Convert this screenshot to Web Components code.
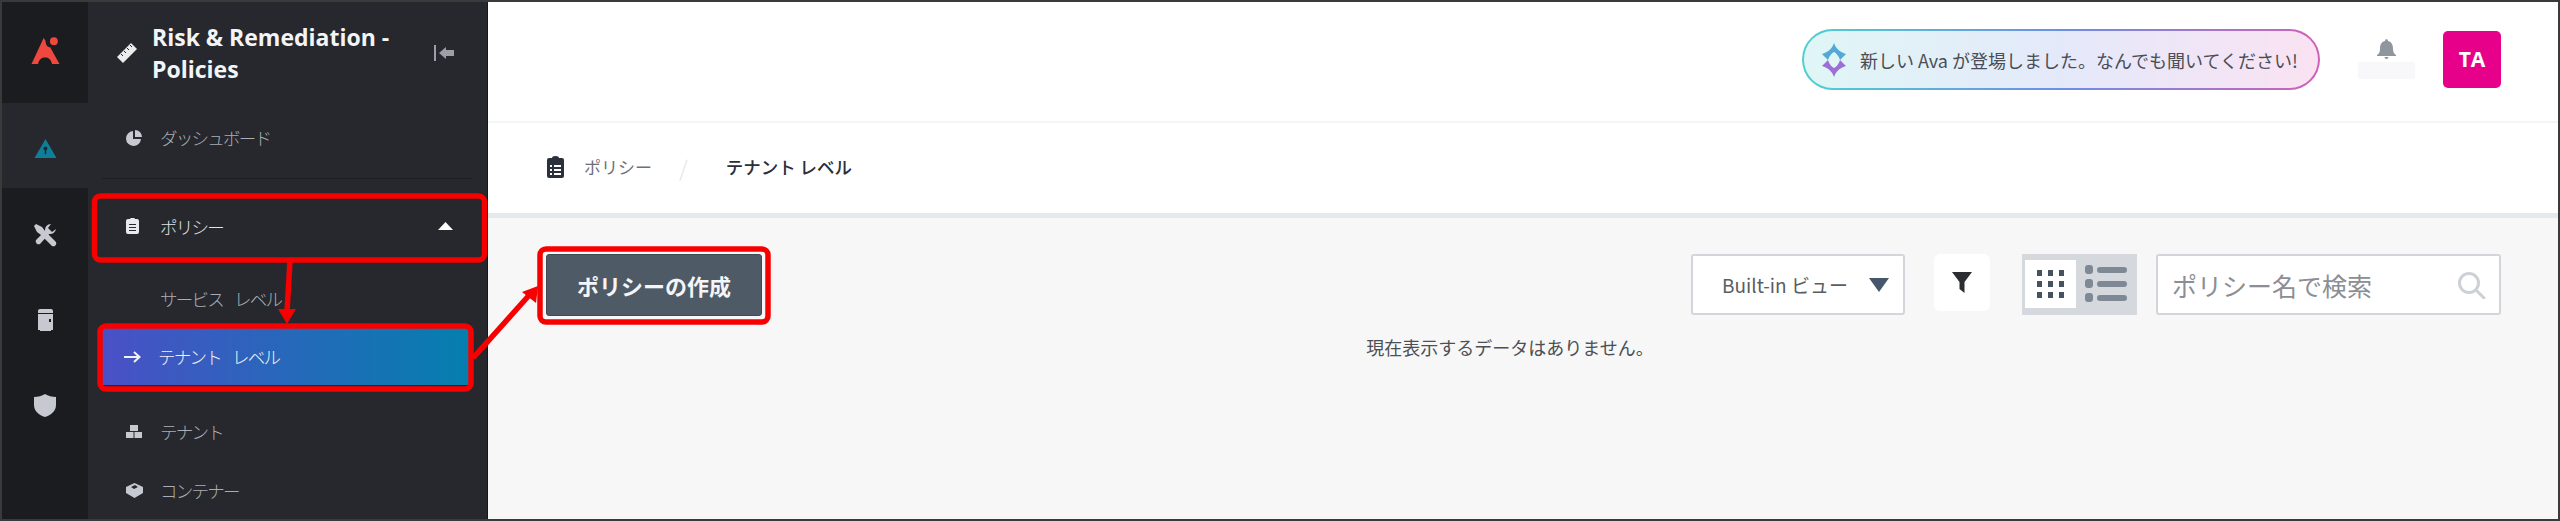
<!DOCTYPE html>
<html lang="ja">
<head>
<meta charset="utf-8">
<title>Policies</title>
<style>
  html, body { margin: 0; height: 521px; overflow: hidden; background: #fff; }
  body { font-family: "Noto Sans CJK JP", "Noto Sans", sans-serif; }
</style>
</head>
<body>
<app-shell>
  <icon-rail slot="rail">
    <rail-item logo>
      <svg viewBox="0 0 30 30" width="29" height="28"><path fill="#f0483e" d="M13 1 L0 29 H7 C8 24 11 22 14.5 22 C18 22 21 24 22 29 H30 L20 11 C17 11 15 8 15 4Z"/><circle cx="24" cy="4.5" r="4.2" fill="#f0483e"/></svg>
    </rail-item>
    <rail-item active>
      <svg viewBox="0 0 24 22" width="23" height="21"><path fill="#0f7f98" d="M12 1 L23.5 21 H.5Z"/><circle cx="12" cy="11" r="2" fill="#1d2a33"/><rect x="11.2" y="12" width="1.6" height="5" fill="#1d2a33"/></svg>
    </rail-item>
    <rail-item>
      <svg viewBox="0 0 24 24" width="24" height="24"><g fill="#c6c9d0"><path d="M3 1 L9 4 L12 8 L23 19 A3 3 0 0 1 19 23 L8 12 L4 9 L1 3Z"/><path d="M23 6 A6 6 0 0 1 16 11 L7 21 A3 3 0 0 1 3 17 L12 8 A6 6 0 0 1 18 1 L15 5 L19 9Z"/></g></svg>
    </rail-item>
    <rail-item>
      <svg viewBox="0 0 15 22" width="15" height="22"><path fill="#c6c9d0" d="M2 0 H13 A2 2 0 0 1 15 2 V4 H0 V2 A2 2 0 0 1 2 0Z M0 5 H15 V21 H13 V22 H2 V21 H0Z"/><rect x="11" y="10" width="2" height="3" fill="#1b1c1f"/></svg>
    </rail-item>
    <rail-item>
      <svg viewBox="0 0 22 23" width="22" height="23"><path fill="#c6c9d0" d="M11 0 C14 2 18 3 22 3 V11 C22 17 17 21 11 23 C5 21 0 17 0 11 V3 C4 3 8 2 11 0Z"/></svg>
    </rail-item>
  </icon-rail>

  <side-nav slot="nav" title="Risk &amp; Remediation - Policies">
    <nav-item style="height:55px;margin-bottom:13px">
      <svg slot="icon" viewBox="0 0 16 16" width="16" height="16"><path fill="#c6c9d0" d="M7 1 V9 H15 A7.5 7.5 0 1 1 7 1Z M9 0 A7 7 0 0 1 16 7 H9Z"/></svg>
      ダッシュボード
    </nav-item>
    <nav-divider></nav-divider>
    <nav-item open style="height:66px;margin:14px 0 10px">
      <svg slot="icon" viewBox="0 0 13 16" width="13" height="16"><path fill="#e8e9ec" fill-rule="evenodd" d="M2 1 H4 A2.5 1.2 0 0 1 9 1 H11 A2 2 0 0 1 13 3 V14 A2 2 0 0 1 11 16 H2 A2 2 0 0 1 0 14 V3 A2 2 0 0 1 2 1Z M3 6 V7 H10 V6Z M3 9 V10 H10 V9Z M3 12 V13 H10 V12Z"/></svg>
      ポリシー
      <svg slot="end" viewBox="0 0 15 8" width="15" height="8"><path fill="#fff" d="M7.5 0 L15 8 H0Z"/></svg>
    </nav-item>
    <nav-item style="height:59px">サービス レベル</nav-item>
    <nav-item current style="height:57px;margin-bottom:19px">
      <svg slot="icon" viewBox="0 0 17 12" width="17" height="12" fill="none" stroke="#f1f2f6" stroke-width="2"><path d="M0 6 H15 M10 1 L15.5 6 L10 11"/></svg>
      テナント レベル
    </nav-item>
    <nav-item style="height:55px;margin-bottom:3px">
      <svg slot="icon" viewBox="0 0 16 14" width="16" height="14"><path fill="#c6c9d0" d="M4 0 H12 V6 H4Z M0 7 H7.5 V13 H0Z M8.5 7 H16 V13 H8.5Z"/></svg>
      テナント
    </nav-item>
    <nav-item style="height:56px">
      <svg slot="icon" viewBox="0 0 17 15" width="17" height="15"><path fill="#c6c9d0" d="M8.5 0 L17 4 V10 L8.5 15 L0 10 V4Z"/><path fill="#26282d" d="M5 4 L9 2 L12 4 L8 6Z"/></svg>
      コンテナー
    </nav-item>
  </side-nav>

  <top-header slot="main"></top-header>
  <bread-crumbs slot="main" parent="ポリシー" current="テナント レベル"></bread-crumbs>
  <policy-content slot="main"></policy-content>

  <red-notes slot="notes"></red-notes>
</app-shell>

<script>
// little helper so each class only has to give its html
class Base extends HTMLElement {
    constructor() {
        super();
        this.shadow = this.attachShadow({mode: 'open'});
    }
    connectedCallback() {
        this.shadow.innerHTML = this.render();
    }
}

class AppShell extends Base {
    render() {
        return `
        <style>
            :host { display: block; position: relative; box-sizing: border-box; width: 2560px; height: 521px; border: 2px solid #3a3a3a; overflow: hidden; }
            .wrap { display: flex; height: 100%; }
            .main { flex: 1; display: flex; flex-direction: column; min-width: 0; }
        </style>
        <div class="wrap">
            <slot name="rail"></slot>
            <slot name="nav"></slot>
            <div class="main"><slot name="main"></slot></div>
        </div>
        <slot name="notes"></slot>
        `;
    }
}

class IconRail extends Base {
    render() {
        return `
        <style>
            :host { display: flex; flex-direction: column; width: 86px; flex: none; background: #1b1c1f; }
        </style>
        <slot></slot>
        `;
    }
}

class RailItem extends Base {
    render() {
        return `
        <style>
            :host { display: flex; align-items: center; justify-content: center; box-sizing: border-box; height: 85px; padding-top: 9px; flex: none; }
            :host([logo]) { height: 101px; padding: 0 0 4px; }
            :host([active]) { background: #26282d; padding-top: 5px; }
        </style>
        <slot></slot>
        `;
    }
}

class SideNav extends Base {
    render() {
        return `
        <style>
            :host { display: flex; flex-direction: column; width: 400px; flex: none; background: #26282d; border-right: 1px solid #16171a; box-sizing: border-box; }
            header { display: flex; align-items: center; height: 108px; box-sizing: border-box; padding: 0 33px 6px 28px; }
            svg.ruler { margin-right: 14px; flex: none; }
            h1 { margin: 0; flex: 1; font: 700 23px/32px "Open Sans", sans-serif; color: #f3f4f6; }
            svg.back { flex: none; }
        </style>
        <header>
            <svg class="ruler" width="22" height="22" viewBox="0 0 22 22"><path fill="#ececee" d="M15 1 L21 7 L7 21 L1 15Z"/><path stroke="#26282d" stroke-width="1" d="M5 12 l2 2 M8 9 l2 2 M11 6 l2 2 M14 3 l2 2"/></svg>
            <h1>${this.getAttribute('title')}</h1>
            <svg class="back" width="20" height="16" viewBox="0 0 20 16"><rect x="0" y="0" width="2" height="16" fill="#9ba0a8"/><path fill="#9ba0a8" d="M5 8 L12 2 V5 H20 V11 H12 V14Z"/></svg>
        </header>
        <slot></slot>
        `;
    }
}

class NavItem extends Base {
    render() {
        return `
        <style>
            :host { display: flex; align-items: center; box-sizing: border-box; margin: 0; padding-left: 38px; color: #a9acb2; font-size: 17.5px; letter-spacing: -1.75px; word-spacing: 9px; font-weight: 300; flex: none; }
            :host([open]) { color: #e3e4e7; background: #26282d; }
            :host([current]) { color: #f1f2f6; margin-left: 13px !important; margin-right: 17px !important; padding-left: 23px; background: linear-gradient(90deg, #4a50c6, #047fae); }
            .ico { width: 34px; flex: none; display: flex; align-items: center; }
            .ico ::slotted(svg) { display: block; }
            .txt { flex: 1; }
            .end { padding-right: 34px; display: flex; }
        </style>
        <div class="ico"><slot name="icon"></slot></div>
        <div class="txt"><slot></slot></div>
        <div class="end"><slot name="end"></slot></div>
        `;
    }
}

class NavDivider extends Base {
    render() {
        return `
        <style>
            :host { display: block; height: 1px; margin: 0 14px; background: #1e1f23; flex: none; }
        </style>
        `;
    }
}

class TopHeader extends Base {
    render() {
        return `
        <style>
            :host { display: flex; align-items: center; justify-content: flex-end; box-sizing: border-box; height: 121px; background: #fff; border-bottom: 2px solid #f3f6f6; padding: 0 57px 5px 0; flex: none; }
            .pill { display: flex; align-items: center; box-sizing: border-box; width: 518px; height: 61px; padding: 2px 0 0 18px; border-radius: 31px; border: 2px solid transparent;
                background: linear-gradient(90deg, #e0f6f6, #e4e9fa 50%, #fae2f2) padding-box, linear-gradient(90deg, #4fd0cf, #6d8fe6 50%, #cf62b8) border-box;
                font-size: 18px; font-weight: 400; color: #4a4d55; white-space: nowrap; }
            .pill svg { margin-right: 14px; flex: none; }
            .bell { width: 57px; margin-left: 38px; margin-right: 28px; display: flex; flex-direction: column; align-items: center; }
            .bell i { display: block; width: 57px; height: 17px; margin-top: 3px; background: #f8f7fa; border-radius: 2px; }
            .avatar { width: 58px; height: 57px; border-radius: 5px; background: #e6008a; color: #fff; font: 700 21px "Open Sans", sans-serif; display: flex; align-items: center; justify-content: center; }
        </style>
        <div class="pill">
            <svg width="24" height="34" viewBox="0 0 24 34"><path fill="#52a9d6" d="M12 0 C14 6 18 9 24 11 L18 17 C17 13 14 10 12 9 C10 10 7 13 6 17 L0 11 C6 9 10 6 12 0Z"/><path fill="#9c6fd6" d="M12 34 C10 28 6 25 0 23 L6 17 C7 21 10 24 12 25 C14 24 17 21 18 17 L24 23 C18 25 14 28 12 34Z"/></svg>
            <span>新しい Ava が登場しました。なんでも聞いてください!</span>
        </div>
        <div class="bell">
            <svg width="19" height="20" viewBox="0 0 19 20"><path fill="#8f969e" d="M9.5 0 A2 2 0 0 1 11 2 C15 3 16 6 16 10 C16 13 17 15 19 16 V17 H0 V16 C2 15 3 13 3 10 C3 6 4 3 8 2 A2 2 0 0 1 9.5 0Z M7.5 18 H11.5 A2 2 0 0 1 7.5 18Z"/></svg>
            <i></i>
        </div>
        <div class="avatar">TA</div>
        `;
    }
}

class BreadCrumbs extends Base {
    render() {
        return `
        <style>
            :host { display: flex; align-items: center; box-sizing: border-box; height: 95px; padding: 0 0 3px 59px; background: #fff; border-bottom: 5px solid #e6e9ec; flex: none; font-size: 17px; }
            svg { margin-right: 20px; }
            .p { color: #6d7179; font-weight: 400; }
            .s { color: #e2e4e8; margin: 0 38px 0 27px; font-size: 22px; font-weight: 300; }
            .c { color: #2b2f38; font-weight: 500; font-size: 17.5px; }
        </style>
        <svg width="17" height="22" viewBox="0 0 17 22"><path fill="#2b313b" fill-rule="evenodd" d="M2 2 H5 A3.5 2 0 0 1 12 2 H15 A2 2 0 0 1 17 4 V20 A2 2 0 0 1 15 22 H2 A2 2 0 0 1 0 20 V4 A2 2 0 0 1 2 2Z M3 9 V11 H5 V9Z M7 9 V11 H14 V9Z M3 13 V15 H5 V13Z M7 13 V15 H14 V13Z M3 17 V19 H5 V17Z M7 17 V19 H14 V17Z"/></svg>
        <span class="p">${this.getAttribute('parent')}</span>
        <span class="s">/</span>
        <span class="c">${this.getAttribute('current')}</span>
        `;
    }
}

class PolicyContent extends Base {
    render() {
        return `
        <style>
            :host { display: block; flex: 1; background: #f7f7f7; box-sizing: border-box; padding: 36px 57px 0 58px; position: relative; }
            .bar { display: flex; align-items: flex-start; }
            .create { width: 216px; height: 62px; box-sizing: border-box; border: 1px solid #3f4a55; border-radius: 3px; background: #4e5a66; color: #f4f5f6; font: 700 22px "Noto Sans CJK JP", sans-serif; display: flex; align-items: center; justify-content: center; }
            .sp { flex: 1; }
            .select { width: 214px; height: 61px; box-sizing: border-box; background: #fff; border: 2px solid #d3d5da; border-radius: 3px; display: flex; align-items: center; padding-left: 29px; font: 400 19px "Noto Sans CJK JP", sans-serif; color: #5a5d63; white-space: nowrap; }
            .select span { flex: 1; }
            .select svg { margin-right: 14px; }
            .filter { width: 56px; height: 57px; margin-left: 29px; background: #fff; border-radius: 6px; display: flex; align-items: center; justify-content: center; }
            .toggle { width: 115px; height: 61px; margin-left: 32px; background: #d5d8dc; display: flex; box-sizing: border-box; padding: 6px 0 7px 3px; }
            .toggle div { display: flex; align-items: center; justify-content: center; }
            .grid { width: 51px; background: #fff; }
            .list { flex: 1; }
            .search { width: 345px; height: 61px; margin-left: 19px; box-sizing: border-box; background: #fff; border: 2px solid #d3d5da; border-radius: 3px; display: flex; align-items: center; padding: 0 13px 0 14px; font: 400 25px "Noto Sans CJK JP", sans-serif; color: #8b8e94; }
            .search span { flex: 1; }
            .empty { position: relative; top: 18px; text-align: center; font: 400 18px "Noto Sans CJK JP", sans-serif; color: #4c4f55; padding-right: 27px; }
        </style>
        <div class="bar">
            <div class="create">ポリシーの作成</div>
            <div class="sp"></div>
            <div class="select"><span>Built-in ビュー</span>
                <svg width="20" height="14" viewBox="0 0 20 14"><path fill="#45566d" d="M0 0 H20 L10 14Z"/></svg>
            </div>
            <div class="filter">
                <svg width="20" height="21" viewBox="0 0 20 21"><path fill="#2b2d31" d="M0 0 H20 L12.5 10 V21 L7.5 17 V10Z"/></svg>
            </div>
            <div class="toggle">
                <div class="grid">
                    <svg width="28" height="28" viewBox="0 0 28 28" fill="#47525f"><rect width="5" height="6"/><rect x="11" width="5" height="6"/><rect x="22" width="5" height="6"/><rect y="11" width="5" height="6"/><rect x="11" y="11" width="5" height="6"/><rect x="22" y="11" width="5" height="6"/><rect y="22" width="5" height="6"/><rect x="11" y="22" width="5" height="6"/><rect x="22" y="22" width="5" height="6"/></svg>
                </div>
                <div class="list">
                    <svg width="44" height="42" viewBox="0 0 44 42" fill="#7f8995"><rect x="0" y="2" width="8" height="9" rx="3"/><rect x="12" y="4" width="30" height="6" rx="3"/><rect x="0" y="16" width="8" height="9" rx="3"/><rect x="12" y="18" width="30" height="6" rx="3"/><rect x="0" y="30" width="8" height="9" rx="3"/><rect x="12" y="32" width="30" height="6" rx="3"/></svg>
                </div>
            </div>
            <div class="search"><span>ポリシー名で検索</span>
                <svg width="29" height="28" viewBox="0 0 29 28" fill="none" stroke="#cdd0d5" stroke-width="3"><circle cx="12" cy="12" r="9.5"/><path d="M19 19 L27 27" stroke-linecap="round"/></svg>
            </div>
        </div>
        <div class="empty">現在表示するデータはありません。</div>
        `;
    }
}

// red call-outs drawn over the screenshot, so these do sit at fixed coords
class RedNotes extends Base {
    render() {
        return `
        <style>
            :host { position: absolute; left: -2px; top: -2px; width: 2560px; height: 521px; pointer-events: none; }
            svg { position: absolute; inset: 0; }
        </style>
        <svg width="2560" height="521" viewBox="0 0 2560 521" fill="none" stroke="#f70000" stroke-width="5.5">
            <rect x="94.5" y="196" width="390" height="64" rx="6"/>
            <rect x="100" y="326" width="371" height="63" rx="6"/>
            <rect x="540" y="249" width="228" height="73" rx="6"/>
            <path d="M290 261 L287 312"/>
            <path fill="#f70000" stroke="none" d="M278 309 H296 L287 324Z"/>
            <path d="M473 358 L532 292"/>
            <path fill="#f70000" stroke="none" d="M522 292 L538 286 L536 303Z"/>
        </svg>
        `;
    }
}

customElements.define('app-shell', AppShell);
customElements.define('icon-rail', IconRail);
customElements.define('rail-item', RailItem);
customElements.define('side-nav', SideNav);
customElements.define('nav-item', NavItem);
customElements.define('nav-divider', NavDivider);
customElements.define('top-header', TopHeader);
customElements.define('bread-crumbs', BreadCrumbs);
customElements.define('policy-content', PolicyContent);
customElements.define('red-notes', RedNotes);
</script>
</body>
</html>
